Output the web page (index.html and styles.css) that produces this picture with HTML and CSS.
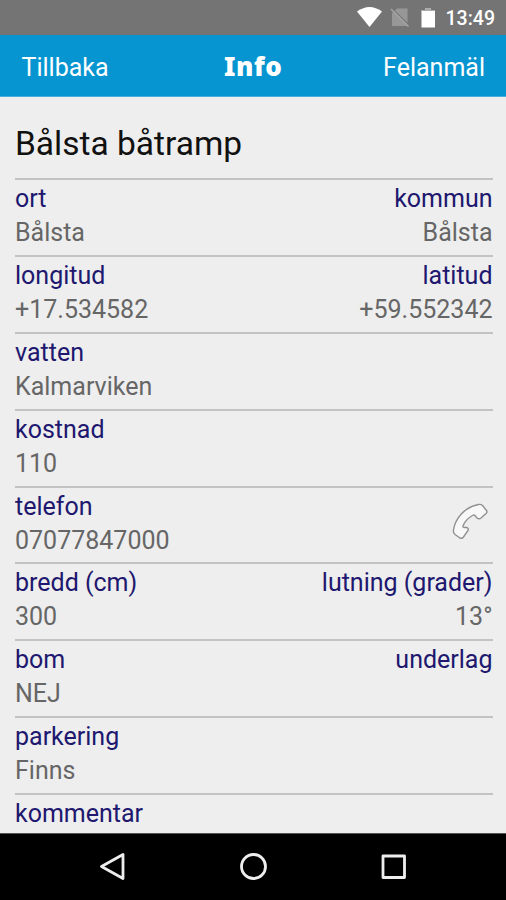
FILE: index.html
```
<!DOCTYPE html>
<html lang="sv">
<head>
  <meta charset="UTF-8">
  <meta name="viewport" content="width=device-width, initial-scale=1.0">
  <title>Bålsta båtramp</title>
  <link rel="stylesheet" href="styles.css">
</head>
<body>
  <div class="status-bar">
    <svg class="status-icons" width="84" height="34" viewBox="0 0 84 34">
      <path d="M1 11.500 Q13.500 2.500 26 11.500 L13.500 27 Z" fill="#fff" />
      <path d="M41 8.500 H51.500 V26 H36 V13 Z" fill="#979797" />
      <path d="M35.500 8.500 L54 26" stroke="#747474" stroke-width="1.500" />
      <path d="M35 9 L52.500 26.500" stroke="#a6a6a6" stroke-width="1.500" />
      <path d="M69.500 8 H74.500 V10 H79 V27.500 H65.500 V10 H69.500 Z" fill="#fff" />
      <path d="M69.500 8 H74.500 V10 H79 V11 H65.500 V10 H69.500 Z" fill="#aaa" />
    </svg>
    <span class="clock">13:49</span>
  </div>
  <header class="header">
    <a class="back">Tillbaka</a>
    <h1>Info</h1>
    <a class="report">Felanmäl</a>
  </header>
  <main class="content">
    <h2>Bålsta båtramp</h2>
    <div class="row">
      <div class="field"><label>ort</label><p>Bålsta</p></div>
      <div class="field right"><label>kommun</label><p>Bålsta</p></div>
    </div>
    <div class="row">
      <div class="field"><label>longitud</label><p>+17.534582</p></div>
      <div class="field right"><label>latitud</label><p>+59.552342</p></div>
    </div>
    <div class="row">
      <div class="field"><label>vatten</label><p>Kalmarviken</p></div>
    </div>
    <div class="row">
      <div class="field"><label>kostnad</label><p>110</p></div>
    </div>
    <div class="row">
      <div class="field"><label>telefon</label><p>07077847000</p></div>
      <svg class="phone" width="38" height="38" viewBox="0 0 38 38">
        <path d="M3.500 28 C5 17 14.500 5 28.500 2.500 Q31 2 32.500 3.500 L36.500 8.500 Q37.500 10 36 11.500 L31 16 Q29 17.500 27 16 L25 13.500 Q24 12.500 22.500 13.500 C18 16 14.500 20 13 24 Q12.500 25.500 14.500 25.500 L16.500 25.500 Q19 26 18 28.500 L13.500 35 Q12 37 10 36 L5 32.500 Q3 31 3.500 28 Z" fill="#f8f8f8" stroke="#909090" stroke-width="1.400" />
      </svg>
    </div>
    <div class="row">
      <div class="field"><label>bredd (cm)</label><p>300</p></div>
      <div class="field right"><label>lutning (grader)</label><p>13°</p></div>
    </div>
    <div class="row">
      <div class="field"><label>bom</label><p>NEJ</p></div>
      <div class="field right"><label>underlag</label></div>
    </div>
    <div class="row">
      <div class="field"><label>parkering</label><p>Finns</p></div>
    </div>
    <div class="row">
      <div class="field"><label>kommentar</label></div>
    </div>
  </main>
  <nav class="nav-bar">
    <svg width="28" height="30" viewBox="0 0 28 30">
      <path d="M24 2.500 V26.500 L2.500 14.500 Z" />
    </svg>
    <svg width="28" height="30" viewBox="0 0 28 30">
      <circle cx="14.500" cy="14.500" r="12" />
    </svg>
    <svg width="28" height="30" viewBox="0 0 28 30">
      <rect x="4" y="4" width="21.500" height="21.500" />
    </svg>
  </nav>
</body>
</html>
```

FILE: styles.css
```
* {
  margin: 0;
  padding: 0;
  box-sizing: border-box;
}

body {
  font-family: Roboto, "Liberation Sans", sans-serif;
  background-color: #eee;
  height: 900px;
  overflow: hidden;
  display: flex;
  flex-direction: column;
}

.status-bar {
  height: 35px;
  flex: none;
  background-color: #747474;
  display: flex;
  justify-content: flex-end;
  padding-right: 11px;
}

.status-icons {
  margin-right: 6px;
}

.clock {
  color: #fff;
  font-size: 19.5px;
  font-weight: 500;
  line-height: 37px;
}

.header {
  height: 62px;
  flex: none;
  background-color: #0795d1;
  border-bottom: 1px solid #48afdb;
  color: #fff;
  display: grid;
  grid-template-columns: 1fr auto 1fr;
  padding: 0 21px 0 21.5px;
  line-height: 65px;
  font-size: 25px;
}

.header h1 {
  font-family: "Noto Sans", sans-serif;
  font-size: 26px;
  font-weight: 900;
  line-height: 62px;
  letter-spacing: 0.6px;
}

.report {
  text-align: right;
}

.content {
  flex: 1;
  min-height: 0;
  overflow: hidden;
  padding: 0 13px 0 15px;
}

h2 {
  height: 81px;
  padding-top: 26px;
  font-size: 33.5px;
  line-height: 42px;
  font-weight: 400;
  color: #111;
}

.row {
  height: 76.9px;
  border-top: 2px solid #c3c3c3;
  display: flex;
  justify-content: space-between;
  font-size: 25px;
  line-height: 34px;
}

.field {
  padding-top: 2px;
}

.field label {
  display: block;
  color: #20176f;
}

.field p {
  color: #666;
}

.right {
  text-align: right;
  padding-right: 0.5px;
}

.phone {
  margin: 14px 5px 0 0;
}

.nav-bar {
  height: 67px;
  flex: none;
  background-color: #000;
  border-top: 1px solid #555;
  display: flex;
  justify-content: center;
  gap: 112px;
  padding-top: 18px;
}

.nav-bar svg {
  fill: none;
  stroke: #eee;
  stroke-width: 2.800;
  stroke-linejoin: round;
}
```
